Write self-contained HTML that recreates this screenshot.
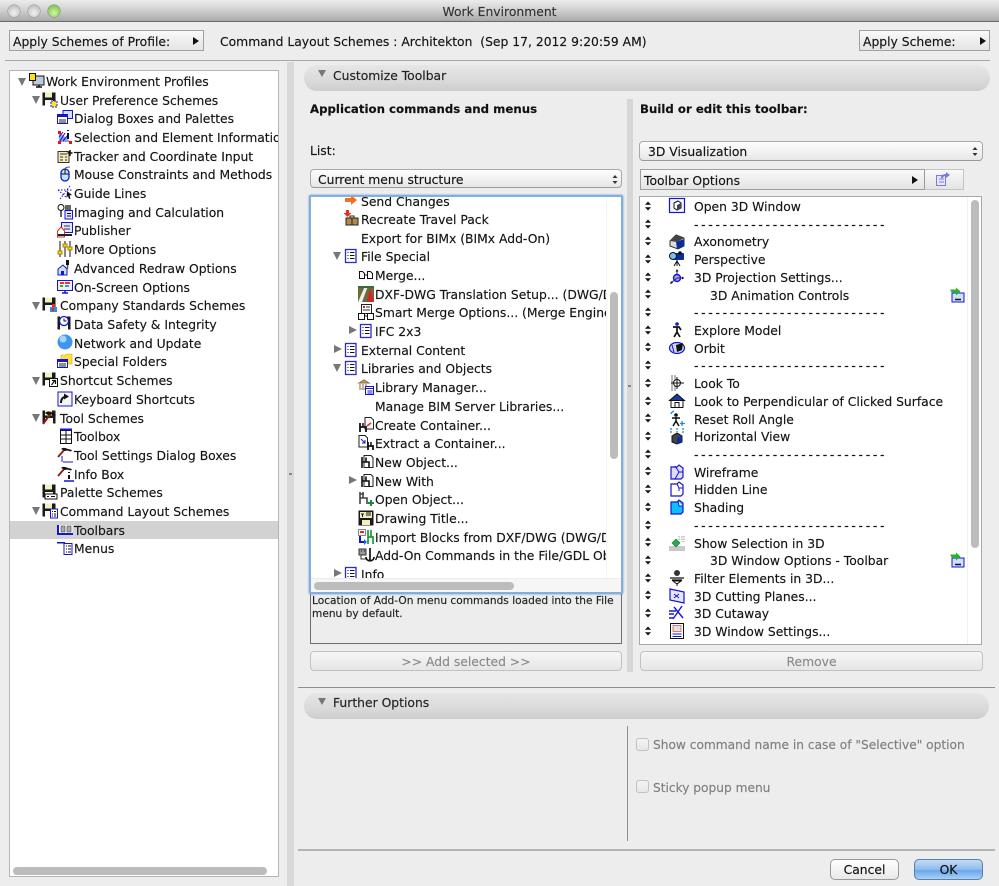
<!DOCTYPE html>
<html><head><meta charset="utf-8"><title>Work Environment</title>
<style>
html,body{margin:0;padding:0;background:#ededed}
#w{position:relative;width:999px;height:886px;overflow:hidden;background:#ededed;font-family:"DejaVu Sans",sans-serif;font-size:12.35px;color:#141414;filter:blur(.35px);-webkit-text-stroke:.15px currentColor}
#w div,#w svg.i{position:absolute}
.t{white-space:nowrap;line-height:16px;height:16px;margin-top:1px}
.d{letter-spacing:2.7px;left:54px}
svg.i{width:16px;height:16px;overflow:visible}
.btn{box-sizing:border-box;border:1px solid #a0a0a0;background:linear-gradient(#fafafa,#eee 50%,#e4e4e4)}
.rnd{box-sizing:border-box;border:1px solid #a9a9a9;border-radius:4px;background:linear-gradient(#fdfdfd,#f3f3f3 50%,#e6e6e6);border-bottom-color:#999}
.pill{left:304px;width:686px;height:26px;border-radius:13px;background:linear-gradient(#e6e6e6,#dadada 60%,#cdcdcd)}
.tri{width:0;height:0;border-left:4.5px solid transparent;border-right:4.5px solid transparent;border-top:8px solid #777}
.trr{width:0;height:0;border-top:4.5px solid transparent;border-bottom:4.5px solid transparent;border-left:8px solid #777}
.ar{width:0;height:0;border-top:4px solid transparent;border-bottom:4px solid transparent;border-left:6px solid #111}
.thumb{background:#bcbcbc;border-radius:4px}
</style></head><body>
<svg width="0" height="0" style="position:absolute"><defs>
<symbol id="fl" viewBox="0 0 16 16"><rect x="0.5" y="0.5" width="13" height="13" fill="#1a1a1a"/><rect x="3" y="0.5" width="7" height="5" fill="#f3f0c0"/><rect x="3" y="8" width="8" height="5.5" fill="#f7f7f7"/></symbol>
<symbol id="ls" viewBox="0 0 16 16"><rect x="2.5" y="1.5" width="10.5" height="13" fill="#fff" stroke="#2a2ad0" stroke-width="1.300"/><path d="M4.5 4.5h1M7 4.5h4.500M4.500 7.500h1M7 7.500h4.500M4.500 10.500h1M7 10.500h4.500" stroke="#111" fill="none"/></symbol>
<symbol id="ud" viewBox="0 0 16 16"><path d="M8 3.500l3 3.200H5zM8 12.500l-3-3.200h6z" fill="#111"/></symbol>
<symbol id="gr" viewBox="0 0 16 16"><rect x="3" y="6" width="12" height="9" fill="#cfe0ff" stroke="#1515d0"/><path d="M6 12.500h6" stroke="#111" stroke-width="1.500"/><path d="M1 2.500h6v-2l4.500 4-4.500 4v-2.500H3z" fill="#2eae2e"/></symbol>
<symbol id="chair" viewBox="0 0 16 16"><path d="M5 1.500h7l2 2v10H5z" fill="#fff" stroke="#222"/><path d="M3 3v11M3 8h7v6M7 3.500v5" stroke="#111" stroke-width="1.600" fill="none"/></symbol>
</defs></svg>
<div id="w">
<!-- title bar -->
<div style="left:0;top:0;width:999px;height:21px;background:linear-gradient(#ececec,#cfcfcf 50%,#a9a9a9);border-bottom:1px solid #6a6a6a"></div>
<div style="left:8px;top:5px;width:12px;height:12px;border-radius:50%;background:radial-gradient(circle at 50% 65%,#f2f2f2,#c4c4c4 70%,#a2a2a2);box-shadow:0 0 0 .5px #8e8e8e"></div>
<div style="left:28px;top:5px;width:12px;height:12px;border-radius:50%;background:radial-gradient(circle at 50% 65%,#f2f2f2,#c4c4c4 70%,#a2a2a2);box-shadow:0 0 0 .5px #8e8e8e"></div>
<div style="left:48px;top:5px;width:12px;height:12px;border-radius:50%;background:radial-gradient(circle at 50% 65%,#d4f5aa,#86c95c 70%,#5da53c);box-shadow:0 0 0 .5px #648f4a"></div>
<div class="t" style="left:0;width:999px;text-align:center;top:3px;color:#333">Work Environment</div>
<!-- top controls -->
<div class="btn" style="left:9px;top:30px;width:195px;height:21px"></div>
<div class="t" style="left:13px;top:33px">Apply Schemes of Profile:</div>
<div class="ar" style="left:193px;top:37px"></div>
<div class="t" style="left:220px;top:33px">Command Layout Schemes : Architekton&nbsp; (Sep 17, 2012 9:20:59 AM)</div>
<div class="btn" style="left:859px;top:30px;width:131px;height:21px"></div>
<div class="t" style="left:863px;top:33px">Apply Scheme:</div>
<div class="ar" style="left:980px;top:37px"></div>
<div style="left:5px;top:60px;width:985px;height:1px;background:#a8a8a8"></div>
<!-- tree -->
<div style="left:9px;top:70px;width:270px;height:807px;box-sizing:border-box;background:#fff;border:1px solid #b5b5b5;overflow:hidden">
<div style="left:0;top:450px;width:268px;height:18px;background:#d2d2d2"></div>
<div class="thumb" style="left:3px;top:796px;width:254px;height:8px"></div>
<div class="tri" style="left:8px;top:7px"></div><div class="tri" style="left:22px;top:25px"></div><div class="tri" style="left:22px;top:231px"></div><div class="tri" style="left:22px;top:306px"></div><div class="tri" style="left:22px;top:343px"></div><div class="tri" style="left:22px;top:436px"></div>
<div class="t" style="left:36px;top:2px">Work Environment Profiles</div>
<div class="t" style="left:50px;top:21px">User Preference Schemes</div>
<div class="t" style="left:64px;top:39px">Dialog Boxes and Palettes</div>
<div class="t" style="left:64px;top:58px">Selection and Element Information</div>
<div class="t" style="left:64px;top:77px">Tracker and Coordinate Input</div>
<div class="t" style="left:64px;top:95px">Mouse Constraints and Methods</div>
<div class="t" style="left:64px;top:114px">Guide Lines</div>
<div class="t" style="left:64px;top:133px">Imaging and Calculation</div>
<div class="t" style="left:64px;top:151px">Publisher</div>
<div class="t" style="left:64px;top:170px">More Options</div>
<div class="t" style="left:64px;top:189px">Advanced Redraw Options</div>
<div class="t" style="left:64px;top:208px">On-Screen Options</div>
<div class="t" style="left:50px;top:226px">Company Standards Schemes</div>
<div class="t" style="left:64px;top:245px">Data Safety &amp; Integrity</div>
<div class="t" style="left:64px;top:264px">Network and Update</div>
<div class="t" style="left:64px;top:282px">Special Folders</div>
<div class="t" style="left:50px;top:301px">Shortcut Schemes</div>
<div class="t" style="left:64px;top:320px">Keyboard Shortcuts</div>
<div class="t" style="left:50px;top:339px">Tool Schemes</div>
<div class="t" style="left:64px;top:357px">Toolbox</div>
<div class="t" style="left:64px;top:376px">Tool Settings Dialog Boxes</div>
<div class="t" style="left:64px;top:395px">Info Box</div>
<div class="t" style="left:50px;top:413px">Palette Schemes</div>
<div class="t" style="left:50px;top:432px">Command Layout Schemes</div>
<div class="t" style="left:64px;top:451px">Toolbars</div>
<div class="t" style="left:64px;top:469px">Menus</div>
<!-- tree icons -->
<svg class="i" style="left:19px;top:2px" viewBox="0 0 16 16"><rect x="4" y="3" width="11" height="9" fill="#bcd" stroke="#111"/><rect x="0.500" y="0.500" width="6" height="7" fill="#ffe020" stroke="#111"/><path d="M7 14h6M10 12v2" stroke="#111" stroke-width="1.500"/></svg>
<svg class="i" style="left:32px;top:21px"><use href="#fl"/><rect x="9" y="9" width="6" height="6" fill="#ffe030" stroke="#22c" stroke-dasharray="2 1"/></svg>
<svg class="i" style="left:47px;top:39px" viewBox="0 0 16 16"><rect x="6" y="0.500" width="9.500" height="8" fill="#cfe0ff" stroke="#1515d0"/><rect x="0.500" y="4.500" width="10" height="9" fill="#fff" stroke="#1515d0"/><rect x="1" y="5" width="9" height="2" fill="#1515d0"/><path d="M2 10h7M2 12h7" stroke="#222"/></svg>
<svg class="i" style="left:47px;top:58px" viewBox="0 0 16 16"><path d="M2 3v10h12z" fill="#8aa0f0"/><path d="M3 12l5-8M6 12l5-6M2 8l4-5" stroke="#1515d0"/><rect x="1" y="12" width="3" height="3" fill="#e11"/><rect x="12" y="12" width="3" height="3" fill="#e11"/><rect x="1" y="2" width="3" height="3" fill="#e11"/><path d="M11 1v1M11 4v6" stroke="#111" stroke-width="2"/></svg>
<svg class="i" style="left:47px;top:77px" viewBox="0 0 16 16"><rect x="1" y="3.500" width="11" height="11" fill="#f2eebb" stroke="#333"/><path d="M3 6h7M3 9h3M3 12h3M8 9h2M8 12h2" stroke="#333"/><path d="M13 2v6M10.500 5h5" stroke="#111" stroke-width="1.500"/></svg>
<svg class="i" style="left:49px;top:95px" viewBox="0 0 16 16"><rect x="2" y="3" width="8" height="12" rx="4" fill="#bfe6ff" stroke="#1515d0" stroke-width="1.300"/><path d="M2.500 8h7M6 3v5" stroke="#111"/><path d="M6 3c0-2 3-2 5-2" stroke="#555" fill="none"/></svg>
<svg class="i" style="left:47px;top:114px" viewBox="0 0 16 16"><path d="M1 5h14M13 1L3 14M1 5l9 8" stroke="#1515d0" stroke-dasharray="1.500 1.500" fill="none"/><path d="M10 6l5 4-2.500.5 1 3-1.500.5-1-3-1.500 2z" fill="#111"/></svg>
<svg class="i" style="left:47px;top:133px" viewBox="0 0 16 16"><circle cx="4" cy="3.500" r="3" fill="#fff" stroke="#111"/><path d="M4 6.500V13" stroke="#111" stroke-width="1.300"/><rect x="8" y="1" width="6" height="5" fill="#666"/><rect x="8" y="6.500" width="7.500" height="8.500" fill="#dde4ff" stroke="#1515d0"/><path d="M10 9.500h4M10 12h4" stroke="#111"/></svg>
<svg class="i" style="left:47px;top:151px" viewBox="0 0 16 16"><rect x="4.500" y="0.500" width="11" height="10" fill="#dfe6ff" stroke="#1515d0"/><path d="M7 4h6M7 7h6" stroke="#333"/><path d="M0.500 9L4 5l3.500 4v6h-7z" fill="#fff" stroke="#d31"/><path d="M1 13h14" stroke="#222" stroke-width="2"/></svg>
<svg class="i" style="left:47px;top:170px" viewBox="0 0 16 16"><path d="M3 0v16M8 0v16M13 0v16" stroke="#111"/><path d="M1 10h4v3H1zM6 3h4v3H6zM11 6h4v3h-4z" fill="#ffd800" stroke="#a80"/></svg>
<svg class="i" style="left:47px;top:189px" viewBox="0 0 16 16"><path d="M1 9l5-4 4 4v6H1z" fill="#cfe0ff" stroke="#1515d0"/><rect x="4" y="11" width="3" height="4" fill="#1515d0"/><path d="M10.500 0v5" stroke="#111" stroke-width="3"/><path d="M10.500 5v4" stroke="#555" stroke-width="1.500"/></svg>
<svg class="i" style="left:47px;top:208px" viewBox="0 0 16 16"><rect x="0.500" y="1.500" width="15" height="10" fill="#eee" stroke="#1515d0"/><path d="M3 4h4M8 4h5" stroke="#e33" stroke-width="2"/><path d="M3 7h3" stroke="#3a3" stroke-width="2"/><path d="M8 7h4" stroke="#39d" stroke-width="2"/><path d="M5 14h6M8 12v2" stroke="#1515d0" stroke-width="1.500"/></svg>
<svg class="i" style="left:32px;top:226px"><use href="#fl"/><rect x="10" y="7" width="3" height="3" fill="#e22"/><rect x="8" y="10" width="7" height="5" fill="#3388e0"/><rect x="10" y="11" width="2" height="3" fill="#e22"/></svg>
<svg class="i" style="left:47px;top:245px"><use href="#fl"/><circle cx="7" cy="5" r="4.500" fill="#fff" stroke="#1515d0" stroke-width="1.300"/><path d="M7 2.500V5h2.500" stroke="#111" fill="none"/></svg>
<svg class="i" style="left:47px;top:263px" viewBox="0 0 16 16"><circle cx="8" cy="8" r="7.500" fill="#3f96ee"/><circle cx="6" cy="5" r="3.500" fill="#a8d4fa"/></svg>
<svg class="i" style="left:47px;top:282px" viewBox="0 0 16 16"><path d="M4 4V2h4l2-1h5v10H4z" fill="#ffe040" stroke="#c8a820" stroke-width=".6"/><rect x="0.500" y="6.500" width="10" height="8" fill="#fff" stroke="#1515d0"/><rect x="1" y="7" width="9" height="2" fill="#1515d0"/><path d="M2 11h7M2 13h7" stroke="#222"/></svg>
<svg class="i" style="left:32px;top:301px"><use href="#fl"/><rect x="7.500" y="6.500" width="8" height="8" fill="#fff" stroke="#111"/><path d="M9.500 13l3-4M10 8.500h3.500V12" stroke="#111" stroke-width="1.200" fill="none"/></svg>
<svg class="i" style="left:47px;top:320px" viewBox="0 0 16 16"><rect x="1" y="1" width="14" height="14" fill="#f6f6ff" stroke="#1515d0"/><path d="M4 12c0-4 2-6 4-6" stroke="#111" stroke-width="2" fill="none"/><path d="M7 2.500l5 3-5 3z" fill="#111"/></svg>
<svg class="i" style="left:32px;top:339px"><use href="#fl"/><path d="M1 14L9 3" stroke="#8a1a10" stroke-width="2"/><path d="M3 3c2-2 5-2 8 0l3 2-2 1-3-2-3 1z" fill="#111"/></svg>
<svg class="i" style="left:49px;top:357px" viewBox="0 0 16 16"><rect x="1.500" y="2.500" width="11" height="13" fill="#fff" stroke="#111"/><path d="M1.500 7h11M1.500 11h11M7 2.500v13" stroke="#111"/><rect x="1" y="0.500" width="12" height="2" fill="#1515d0"/></svg>
<svg class="i" style="left:47px;top:376px" viewBox="0 0 16 16"><path d="M1 10L8 2" stroke="#8a1a10" stroke-width="1.800"/><path d="M4 2c2-2 5-1 7 0l4 1-1 1.500-4-1-2 .5z" fill="#111"/><path d="M6 15h10M5 9v6" stroke="#1515d0" fill="none"/></svg>
<svg class="i" style="left:47px;top:395px" viewBox="0 0 16 16"><path d="M1 10L8 2" stroke="#8a1a10" stroke-width="1.800"/><path d="M4 2c2-2 5-1 7 0l4 1-1 1.500-4-1-2 .5z" fill="#111"/><path d="M12 6v1M12 9v4" stroke="#111" stroke-width="2"/><path d="M7 15h10" stroke="#1515d0" stroke-width="1.500"/></svg>
<svg class="i" style="left:32px;top:413px"><use href="#fl"/><rect x="3" y="10" width="12" height="5" fill="#fff" stroke="#111"/><path d="M5 12.500h2M9 12.500h4" stroke="#111"/></svg>
<svg class="i" style="left:32px;top:432px"><use href="#fl"/><rect x="8.500" y="6" width="7" height="9" fill="#fff" stroke="#1515d0"/><path d="M10 8.500h1M12 8.500h2M10 11h1M12 11h2M10 13h1M12 13h2" stroke="#111"/></svg>
<svg class="i" style="left:47px;top:451px" viewBox="0 0 16 16"><rect x="0.500" y="3" width="15" height="9" fill="#fff"/><path d="M1 3v9h15" stroke="#1515d0" stroke-width="2" fill="none"/><rect x="4" y="4" width="4" height="6" fill="#aaa" stroke="#444" stroke-width=".6"/><rect x="10" y="4" width="4" height="6" fill="#aaa" stroke="#444" stroke-width=".6"/></svg>
<svg class="i" style="left:47px;top:469px" viewBox="0 0 16 16"><path d="M0 2h8v1.500H0z" fill="#1515d0"/><path d="M7 3.500h8v11H7z" fill="#fff" stroke="#1515d0"/><path d="M9 6h1M11 6h3M9 9h1M11 9h3M9 12h1M11 12h3" stroke="#111"/></svg>
</div>
<!-- splitter -->
<div style="left:287px;top:62px;width:7px;height:824px;background:#d9d9d9"></div>
<div style="left:289px;top:473px;width:3px;height:2px;background:#888"></div>
<!-- customize -->
<div class="pill" style="top:65px"></div>
<div class="tri" style="left:318px;top:70px;border-left-width:4px;border-right-width:4px;border-top-width:7px"></div>
<div class="t" style="left:333px;top:67px;color:#222">Customize Toolbar</div>
<div class="t" style="left:310px;top:100px;font-weight:bold;font-size:11.75px;color:#111">Application commands and menus</div>
<div class="t" style="left:640px;top:100px;font-weight:bold;font-size:11.75px;color:#111">Build or edit this toolbar:</div>
<div style="left:627px;top:99px;width:6px;height:573px;background:#d6d6d6"></div>
<div style="left:628px;top:385px;width:3px;height:2px;background:#888"></div>
<div class="t" style="left:310px;top:142px">List:</div>
<div class="rnd" style="left:310px;top:169px;width:312px;height:19px"></div>
<div class="t" style="left:318px;top:171px">Current menu structure</div>
<svg class="i" style="left:607px;top:171px"><path d="M8 4l2.500 3h-5zM8 13l-2.500-3h5z" fill="#333"/></svg>
<!-- middle list -->
<div style="left:309px;top:195px;width:314px;height:399px;box-sizing:border-box;border:2px solid #86aedc;border-radius:2px;background:#fff;box-shadow:0 0 1px 1px #b4cde8"></div>
<div style="left:311px;top:197px;width:296px;height:381px;overflow:hidden;background:#fff">
<div class="tri" style="left:22px;top:55px"></div><div class="trr" style="left:38px;top:129px"></div><div class="trr" style="left:23px;top:148px"></div><div class="tri" style="left:22px;top:167px"></div><div class="trr" style="left:38px;top:279px"></div><div class="trr" style="left:23px;top:372px"></div>
<div class="t" style="left:50px;top:-4px">Send Changes</div>
<div class="t" style="left:50px;top:14px">Recreate Travel Pack</div>
<div class="t" style="left:50px;top:33px">Export for BIMx (BIMx Add-On)</div>
<div class="t" style="left:50px;top:51px">File Special</div>
<div class="t" style="left:64px;top:70px">Merge...</div>
<div class="t" style="left:64px;top:89px">DXF-DWG Translation Setup... (DWG/DXF Add-On)</div>
<div class="t" style="left:64px;top:107px">Smart Merge Options... (Merge Engine Add-On)</div>
<div class="t" style="left:64px;top:126px">IFC 2x3</div>
<div class="t" style="left:50px;top:145px">External Content</div>
<div class="t" style="left:50px;top:163px">Libraries and Objects</div>
<div class="t" style="left:64px;top:182px">Library Manager...</div>
<div class="t" style="left:64px;top:201px">Manage BIM Server Libraries...</div>
<div class="t" style="left:64px;top:220px">Create Container...</div>
<div class="t" style="left:64px;top:238px">Extract a Container...</div>
<div class="t" style="left:64px;top:257px">New Object...</div>
<div class="t" style="left:64px;top:276px">New With</div>
<div class="t" style="left:64px;top:294px">Open Object...</div>
<div class="t" style="left:64px;top:313px">Drawing Title...</div>
<div class="t" style="left:64px;top:332px">Import Blocks from DXF/DWG (DWG/DXF Add-On)</div>
<div class="t" style="left:64px;top:350px">Add-On Commands in the File/GDL Objects Menu</div>
<div class="t" style="left:50px;top:369px">Info</div>
<svg class="i" style="left:32px;top:-5px" viewBox="0 0 16 16"><path d="M2 6h6V3l6 5-6 5v-3H2z" fill="#f4701a"/></svg>
<svg class="i" style="left:32px;top:13px" viewBox="0 0 16 16"><path d="M3 0h3v3h2.500L4.500 7 .5 3H3z" fill="#e5301a"/><rect x="3" y="8" width="12" height="7" fill="#b08a4a" stroke="#222"/><path d="M7 8V6h4v2M9 8v7" stroke="#222" fill="none"/></svg>
<svg class="i" style="left:32px;top:51px"><use href="#ls"/></svg>
<svg class="i" style="left:47px;top:70px" viewBox="0 0 16 16"><path d="M1.500 4.500h3l2 2v5h-5zM9.500 4.500h3l2 2v5h-5z" fill="#fff" stroke="#111"/><path d="M6.500 8h3" stroke="#111"/></svg>
<svg class="i" style="left:47px;top:89px" viewBox="0 0 16 16"><rect x="0" y="0" width="16" height="16" fill="#6d6a3c"/><path d="M0 16L7 0h3L4 16z" fill="#eee"/><path d="M9 16L12 2l4 14z" fill="#d52424"/><path d="M0 0h16v2H0z" fill="#3a6a3a"/></svg>
<svg class="i" style="left:47px;top:107px" viewBox="0 0 16 16"><rect x="3.500" y="0.500" width="10" height="9" fill="#fff" stroke="#222"/><path d="M5 3h2" stroke="#d22" stroke-width="2"/><path d="M8 3h4M5 6h7" stroke="#333"/><rect x="0.500" y="9.500" width="6" height="6" fill="#fff" stroke="#111"/><rect x="9.500" y="9.500" width="6" height="6" fill="#fff" stroke="#111"/><path d="M6 12h4" stroke="#111"/></svg>
<svg class="i" style="left:47px;top:126px"><use href="#ls"/></svg>
<svg class="i" style="left:32px;top:145px"><use href="#ls"/></svg>
<svg class="i" style="left:32px;top:163px"><use href="#ls"/></svg>
<svg class="i" style="left:47px;top:182px" viewBox="0 0 16 16"><path d="M1 4l5-3 5 3zM1 10h9M2 5v4M5 5v4M8 5v4" stroke="#8a6a3a" fill="#caa877"/><rect x="7.500" y="7.500" width="8" height="8" fill="#fff" stroke="#1515d0"/><path d="M7.500 9.500h8M9.500 12h5M9.500 14h5" stroke="#1515d0"/></svg>
<svg class="i" style="left:47px;top:220px" viewBox="0 0 16 16"><path d="M7 0.500h6l2.500 2.500v9H7z" fill="#fff" stroke="#222"/><path d="M9 9l4-3" stroke="#e22" stroke-width="1.500"/><path d="M2 6v9M2 10h6v5" stroke="#111" stroke-width="1.800" fill="none"/><path d="M5 6v4" stroke="#111" stroke-width="1.500"/></svg>
<svg class="i" style="left:47px;top:238px" viewBox="0 0 16 16"><path d="M1 0.500h6l2.500 2.500v9H1z" fill="#fff" stroke="#222"/><path d="M3 4l4 4M7 5v3H4" stroke="#1515d0" fill="none"/><path d="M10 7v8M10 11h5v4" stroke="#111" stroke-width="1.800" fill="none"/><path d="M13 7v4" stroke="#111" stroke-width="1.500"/></svg>
<svg class="i" style="left:48px;top:257px"><use href="#chair"/></svg>
<svg class="i" style="left:48px;top:276px"><use href="#chair"/></svg>
<svg class="i" style="left:47px;top:294px" viewBox="0 0 16 16"><path d="M2 1v12M2 7h7v6M5 1v6M2 3h4" stroke="#444" stroke-width="1.600" fill="none"/><path d="M13 9v6M10 12h6" stroke="#1a8a3a" stroke-width="2"/></svg>
<svg class="i" style="left:47px;top:313px" viewBox="0 0 16 16"><rect x="0.500" y="0.500" width="15" height="15" fill="#1a1a1a"/><rect x="2" y="2" width="12" height="6" fill="#f3f0c0"/><path d="M3 4h3M4.500 4v3M8 3h5M8 5h5" stroke="#111"/><rect x="4" y="10" width="8" height="5" fill="#f3f0c0"/></svg>
<svg class="i" style="left:47px;top:332px" viewBox="0 0 16 16"><rect x="0.500" y="0.500" width="7" height="6" fill="#fff" stroke="#888"/><rect x="2" y="2" width="4" height="2" fill="#e22"/><path d="M2 7v6h4" stroke="#1515d0" stroke-width="2" fill="none"/><path d="M6 10l3 3-3 3z" fill="#1a60e0"/><path d="M10 1v14M10 8h5v7M13 1v7" stroke="#1a9a3a" stroke-width="1.700" fill="none"/></svg>
<svg class="i" style="left:47px;top:350px" viewBox="0 0 16 16"><path d="M1 2h7v6H1z" fill="#999" stroke="#333"/><path d="M3 4h1M6 4h1" stroke="#111"/><path d="M3 8v4h5" stroke="#333" fill="none"/><path d="M12 1v13M8 10c0 5 8 5 8 0" stroke="#111" stroke-width="1.700" fill="none"/></svg>
<svg class="i" style="left:32px;top:369px"><use href="#ls"/></svg>
</div>
<div style="left:606px;top:197px;width:15px;height:395px;background:#fff;border-left:1px solid #f4f4f4;box-sizing:border-box"></div>
<div style="left:311px;top:578px;width:310px;height:14px;background:#f6f6f6;border-top:1px solid #ececec;box-sizing:border-box"></div>
<div class="thumb" style="left:610px;top:292px;width:8px;height:167px"></div>
<div class="thumb" style="left:314px;top:582px;width:200px;height:8px"></div>
<div style="left:310px;top:594px;width:312px;height:50px;box-sizing:border-box;border:1px solid #6e6e6e;border-top:0"></div>
<div class="t" style="left:312px;top:594px;font-size:10.6px;line-height:12.7px;height:auto;color:#222;white-space:normal;width:310px">Location of Add-On menu commands loaded into the File menu by default.</div>
<div class="rnd" style="left:310px;top:651px;width:312px;height:20px;text-align:center;line-height:20px;color:#8a8a8a;background:linear-gradient(#f6f6f6,#eee 50%,#e6e6e6);border-color:#c2c2c2">&gt;&gt; Add selected &gt;&gt;</div>
<!-- right side -->
<div class="rnd" style="left:639px;top:141px;width:344px;height:20px"></div>
<div class="t" style="left:648px;top:143px">3D Visualization</div>
<svg class="i" style="left:967px;top:143px"><path d="M8 4l2.500 3h-5zM8 13l-2.500-3h5z" fill="#333"/></svg>
<div class="btn" style="left:640px;top:169px;width:285px;height:21px"></div>
<div class="t" style="left:644px;top:172px">Toolbar Options</div>
<div class="ar" style="left:912px;top:176px"></div>
<div class="btn" style="left:924px;top:169px;width:40px;height:21px;border-color:#c4c4c4;border-left-color:#999"></div>
<svg class="i" style="left:935px;top:171px" viewBox="0 0 16 16"><rect x="1.500" y="4.500" width="9" height="10" fill="#e6e6ff" stroke="#7a7ae6"/><path d="M4 8h5M4 11h5" stroke="#7a7ae6"/><path d="M6 7c0-3 2-4 5-4V1l4 3-4 3V5c-2 0-3 1-3 2z" fill="#7a7ae6"/></svg>
<div style="left:639px;top:196px;width:343px;height:449px;box-sizing:border-box;background:#fff;border:1px solid #a8a8a8;overflow:hidden">
<div style="left:327px;top:0;width:15px;height:449px;border-left:1px solid #f0f0f0"></div>
<div class="thumb" style="left:331px;top:3px;width:8px;height:348px"></div>
<div class="t" style="left:54px;top:1px">Open 3D Window</div>
<div class="t d" style="top:19px">---------------------------</div>
<div class="t" style="left:54px;top:36px">Axonometry</div>
<div class="t" style="left:54px;top:54px">Perspective</div>
<div class="t" style="left:54px;top:72px">3D Projection Settings...</div>
<div class="t" style="left:70px;top:90px">3D Animation Controls</div>
<div class="t d" style="top:107px">---------------------------</div>
<div class="t" style="left:54px;top:125px">Explore Model</div>
<div class="t" style="left:54px;top:143px">Orbit</div>
<div class="t d" style="top:160px">---------------------------</div>
<div class="t" style="left:54px;top:178px">Look To</div>
<div class="t" style="left:54px;top:196px">Look to Perpendicular of Clicked Surface</div>
<div class="t" style="left:54px;top:214px">Reset Roll Angle</div>
<div class="t" style="left:54px;top:231px">Horizontal View</div>
<div class="t d" style="top:249px">---------------------------</div>
<div class="t" style="left:54px;top:267px">Wireframe</div>
<div class="t" style="left:54px;top:284px">Hidden Line</div>
<div class="t" style="left:54px;top:302px">Shading</div>
<div class="t d" style="top:320px">---------------------------</div>
<div class="t" style="left:54px;top:338px">Show Selection in 3D</div>
<div class="t" style="left:70px;top:355px">3D Window Options - Toolbar</div>
<div class="t" style="left:54px;top:373px">Filter Elements in 3D...</div>
<div class="t" style="left:54px;top:391px">3D Cutting Planes...</div>
<div class="t" style="left:54px;top:408px">3D Cutaway</div>
<div class="t" style="left:54px;top:426px">3D Window Settings...</div>
<svg class="i" style="left:0;top:1px"><use href="#ud"/></svg><svg class="i" style="left:0;top:19px"><use href="#ud"/></svg><svg class="i" style="left:0;top:36px"><use href="#ud"/></svg><svg class="i" style="left:0;top:54px"><use href="#ud"/></svg><svg class="i" style="left:0;top:72px"><use href="#ud"/></svg><svg class="i" style="left:0;top:89px"><use href="#ud"/></svg><svg class="i" style="left:0;top:107px"><use href="#ud"/></svg><svg class="i" style="left:0;top:125px"><use href="#ud"/></svg><svg class="i" style="left:0;top:142px"><use href="#ud"/></svg><svg class="i" style="left:0;top:160px"><use href="#ud"/></svg><svg class="i" style="left:0;top:178px"><use href="#ud"/></svg><svg class="i" style="left:0;top:196px"><use href="#ud"/></svg><svg class="i" style="left:0;top:213px"><use href="#ud"/></svg><svg class="i" style="left:0;top:231px"><use href="#ud"/></svg><svg class="i" style="left:0;top:249px"><use href="#ud"/></svg><svg class="i" style="left:0;top:266px"><use href="#ud"/></svg><svg class="i" style="left:0;top:284px"><use href="#ud"/></svg><svg class="i" style="left:0;top:302px"><use href="#ud"/></svg><svg class="i" style="left:0;top:320px"><use href="#ud"/></svg><svg class="i" style="left:0;top:337px"><use href="#ud"/></svg><svg class="i" style="left:0;top:355px"><use href="#ud"/></svg><svg class="i" style="left:0;top:373px"><use href="#ud"/></svg><svg class="i" style="left:0;top:390px"><use href="#ud"/></svg><svg class="i" style="left:0;top:408px"><use href="#ud"/></svg><svg class="i" style="left:0;top:426px"><use href="#ud"/></svg>
<svg class="i" style="left:29px;top:1px" viewBox="0 0 16 16"><rect x="0.500" y="0.500" width="15" height="14" fill="#f5f5ff" stroke="#1515d0" stroke-width="1.200"/><path d="M5 5l4-2 3 2v5l-4 2-3-2z" fill="#fff" stroke="#111"/><path d="M8 7l4-2v5l-4 2z" fill="#444"/></svg>
<svg class="i" style="left:29px;top:37px" viewBox="0 0 16 16"><path d="M1 7l6-6 8 3v8l-6 3-8-3z" fill="#ddd" stroke="#333"/><path d="M7 8l8-3v7l-7 3z" fill="#0c2e9c"/><path d="M1 7l6-6 8 3-7 4z" fill="#444"/></svg>
<svg class="i" style="left:29px;top:54px" viewBox="0 0 16 16"><rect x="4" y="2" width="11" height="7" rx="1" fill="#0c2e9c"/><circle cx="4" cy="5" r="3.500" fill="#7ac0ee" stroke="#111"/><circle cx="11" cy="2" r="1.800" fill="#111"/><path d="M8 9v6M8 10l-3 5M8 10l3 5" stroke="#111"/></svg>
<svg class="i" style="left:29px;top:72px" viewBox="0 0 16 16"><circle cx="8" cy="9" r="3.500" fill="#aac" stroke="#1515d0" stroke-width="1.400"/><path d="M8 1v5M8 9l-6 5M8 9h7" stroke="#1515d0"/><path d="M6.500 2.500L8 0l1.500 2.500zM15 9l-2-1.500v3zM1 15l1-3 2 2z" fill="#111"/></svg>
<svg class="i" style="left:29px;top:125px" viewBox="0 0 16 16"><circle cx="8" cy="2" r="1.800" fill="#1515d0"/><path d="M4 5h6l2 3M8 5v5l-3 5M8 10l3 5" stroke="#111" stroke-width="1.700" fill="none"/></svg>
<svg class="i" style="left:29px;top:143px" viewBox="0 0 16 16"><ellipse cx="8" cy="8" rx="7.500" ry="5.500" fill="#cfd8f5" stroke="#1515d0" stroke-width="1.200"/><path d="M7 5l7-2-1 7-5 2z" fill="#111"/><path d="M3 5l2 7" stroke="#1515d0"/></svg>
<svg class="i" style="left:29px;top:178px" viewBox="0 0 16 16"><path d="M3 0v16M6 0v16" stroke="#777"/><circle cx="8" cy="8" r="3.500" fill="#fff" stroke="#111"/><path d="M8 2v12M2 8h13" stroke="#111"/></svg>
<svg class="i" style="left:29px;top:196px" viewBox="0 0 16 16"><path d="M0.500 7.500L8 1l7.500 6.500z" fill="#1a3a9a" stroke="#111"/><rect x="2" y="7.500" width="12" height="7" fill="#fff" stroke="#111"/><rect x="6" y="9.500" width="4" height="5" fill="#fff" stroke="#111"/></svg>
<svg class="i" style="left:29px;top:214px" viewBox="0 0 16 16"><circle cx="7" cy="4" r="1.800" fill="#111"/><path d="M3 7h8M7 6v4l-3 5M7 10l3 5" stroke="#111" stroke-width="1.500" fill="none"/><path d="M2 3c0-1 1-2 3-3M13 10v5M11 12.500h5" stroke="#1a8ae0" stroke-width="1.300" fill="none"/></svg>
<svg class="i" style="left:29px;top:231px" viewBox="0 0 16 16"><path d="M3 8l5-3 5 3v6l-5 2-5-2z" fill="#444" stroke="#111"/><path d="M8 10l5-2v6l-5 2z" fill="#0c2e9c"/><path d="M2 0v5M8 0v4M14 0v5" stroke="#1a8ae0" stroke-width="1.300" stroke-dasharray="2 1"/></svg>
<svg class="i" style="left:29px;top:267px" viewBox="0 0 16 16"><path d="M2 3h6l2-2 4 3v9l-2 2H2z" fill="#dde" stroke="#1515d0" stroke-width="1.200"/><path d="M6 2l4 6-4 7M10 8h4" stroke="#1515d0" fill="none"/></svg>
<svg class="i" style="left:29px;top:284px" viewBox="0 0 16 16"><path d="M2 3h6l2-2 4 3v9l-2 2H2z" fill="#fff" stroke="#1515d0" stroke-width="1.200"/><path d="M8 3l2 4h4M10 7v3" stroke="#1515d0" fill="none"/></svg>
<svg class="i" style="left:29px;top:302px" viewBox="0 0 16 16"><path d="M2 3h6l2-2 4 3v9l-2 2H2z" fill="#0cc0ff" stroke="#1515d0" stroke-width="1.200"/><path d="M9 2l1 5h4" fill="#fff" stroke="#1515d0"/></svg>
<svg class="i" style="left:29px;top:338px" viewBox="0 0 16 16"><rect x="0" y="11" width="16" height="5" fill="#c8c8c8"/><path d="M7 4l4 4-4 4-4-4z" fill="#2aa84a" stroke="#127a2a" stroke-width=".6"/><path d="M10 1v6M13 1v6M15 1v6" stroke="#999" stroke-dasharray="1.500 1"/></svg>
<svg class="i" style="left:29px;top:373px" viewBox="0 0 16 16"><circle cx="8" cy="3" r="3" fill="#333"/><path d="M1 8h14M3 10h10" stroke="#111" stroke-width="1.300"/><path d="M4 11l4 3 4-3zM8 13v3" fill="#fff" stroke="#111"/></svg>
<svg class="i" style="left:29px;top:391px" viewBox="0 0 16 16"><path d="M1 1l14 3v11L1 12z" fill="#e5e5ff" stroke="#1515d0" stroke-width="1.200"/><path d="M5 6l5 4M5 10l5-4" stroke="#1515d0"/></svg>
<svg class="i" style="left:29px;top:408px" viewBox="0 0 16 16"><path d="M4 14L13 1M5 2l9 11M0 6h7M0 9h5M0 13h5" stroke="#1515e0" stroke-width="1.400"/></svg>
<svg class="i" style="left:29px;top:426px" viewBox="0 0 16 16"><rect x="1.500" y="0.500" width="13" height="15" fill="#fff" stroke="#111"/><rect x="4" y="2.500" width="8" height="6" fill="#e2e2e2" stroke="#d22" stroke-width=".6"/><path d="M3.500 11h9M3.500 13.500h9" stroke="#1515d0"/></svg>
<svg class="i" style="left:309px;top:90px"><use href="#gr"/></svg>
<svg class="i" style="left:309px;top:355px"><use href="#gr"/></svg>
</div>
<div class="rnd" style="left:640px;top:651px;width:343px;height:20px;text-align:center;line-height:20px;color:#8a8a8a;background:linear-gradient(#f6f6f6,#eee 50%,#e6e6e6);border-color:#c2c2c2">Remove</div>
<div style="left:298px;top:687px;width:697px;height:1px;background:#8e8e8e"></div>
<!-- further -->
<div class="pill" style="top:693px;width:685px"></div>
<div class="tri" style="left:318px;top:698px;border-left-width:4px;border-right-width:4px;border-top-width:7px"></div>
<div class="t" style="left:333px;top:694px;color:#222">Further Options</div>
<div style="left:627px;top:726px;width:1px;height:115px;background:#8e8e8e"></div>
<div style="left:636px;top:738px;width:13px;height:13px;box-sizing:border-box;border:1px solid #c2c2c2;border-radius:3px;background:linear-gradient(#f4f4f4,#e6e6e6)"></div>
<div class="t" style="left:653px;top:736px;color:#7e7e7e;font-size:12.2px">Show command name in case of "Selective" option</div>
<div style="left:636px;top:780px;width:13px;height:13px;box-sizing:border-box;border:1px solid #c2c2c2;border-radius:3px;background:linear-gradient(#f4f4f4,#e6e6e6)"></div>
<div class="t" style="left:653px;top:779px;color:#7e7e7e;font-size:12.2px">Sticky popup menu</div>
<div style="left:298px;top:849px;width:697px;height:2px;background:#b4b4b4"></div>
<div class="rnd" style="left:830px;top:859px;width:69px;height:21px;border-radius:5px;text-align:center;line-height:21px;border-color:#999;background:linear-gradient(#fff,#f4f4f4 50%,#e8e8e8)">Cancel</div>
<div class="rnd" style="left:914px;top:859px;width:69px;height:21px;border-radius:5px;text-align:center;line-height:21px;border-color:#5b7fa8;color:#111;background:linear-gradient(#c3daf5,#8fbcee 50%,#6aa6ec 55%,#a8d0f5)">OK</div>
</div>
</body></html>
